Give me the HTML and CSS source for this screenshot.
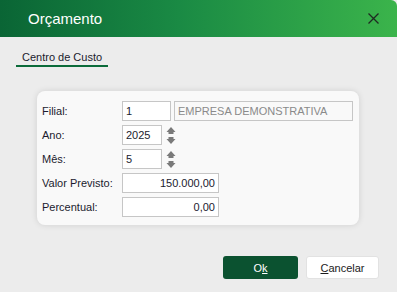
FILE: index.html
```html
<!DOCTYPE html>
<html lang="pt-BR">
<head>
  <meta charset="UTF-8">
  <meta name="viewport" content="width=device-width, initial-scale=1.0">
  <title>Orçamento</title>
  <link rel="stylesheet" href="styles.css">
</head>
<body>

  <div class="window">
    <div class="titlebar">
      <span class="title">Orçamento</span>
      <svg class="close" width="11" height="11" viewBox="0 0 11 11">
        <path d="M0.5 0.5 L10.5 10.5 M10.5 0.5 L0.5 10.5" stroke="#1f2a22" stroke-width="1.3" fill="none"/>
      </svg>
    </div>

    <div class="tabs">
      <div class="tab">Centro de Custo</div>
    </div>

    <div class="panel">
      <div class="row">
        <label>Filial:</label>
        <div class="field small">1</div>
        <div class="field readonly">EMPRESA DEMONSTRATIVA</div>
      </div>
      <div class="row">
        <label>Ano:</label>
        <div class="field year">2025</div>
        <div class="spin">
          <svg width="10" height="17" viewBox="0 0 10 17">
            <path d="M5 0 L9.5 5 L0.5 5 Z M2.5 5 H7.5 V7 H2.5 Z" fill="#7a7a7a"/>
            <path d="M2.5 10 H7.5 V12 H2.5 Z M0.5 12 L9.5 12 L5 17 Z" fill="#7a7a7a"/>
          </svg>
        </div>
      </div>
      <div class="row">
        <label>Mês:</label>
        <div class="field year">5</div>
        <div class="spin">
          <svg width="10" height="17" viewBox="0 0 10 17">
            <path d="M5 0 L9.5 5 L0.5 5 Z M2.5 5 H7.5 V7 H2.5 Z" fill="#7a7a7a"/>
            <path d="M2.5 10 H7.5 V12 H2.5 Z M0.5 12 L9.5 12 L5 17 Z" fill="#7a7a7a"/>
          </svg>
        </div>
      </div>
      <div class="row">
        <label>Valor Previsto:</label>
        <div class="field money">150.000,00</div>
      </div>
      <div class="row">
        <label>Percentual:</label>
        <div class="field money">0,00</div>
      </div>
    </div>

    <div class="footer">
      <button class="btn ok">O<u>k</u></button>
      <button class="btn cancel"><u>C</u>ancelar</button>
    </div>
  </div>

</body>
</html>
```

FILE: styles.css
```css
body {
  margin: 0;
  font-family: "Liberation Sans", Arial, sans-serif;
  background-color: #ececec;
  color: #1b1b2e;
}

.window {
  width: 397px;
  height: 292px;
  background-color: #ececec;
}

.titlebar {
  height: 37px;
  display: flex;
  align-items: center;
  padding-left: 28px;
  padding-right: 18px;
  background: linear-gradient(90deg, #0a6535 0%, #1a8a44 45%, #3bb44b 100%);
  border-top-right-radius: 6px;
}

.title {
  font-size: 15px;
  color: #fff;
  margin-top: -1px;
}

.close {
  margin-left: auto;
}

/* tabs */
.tabs {
  display: flex;
  padding-left: 16px;
  padding-top: 10px;
}

.tab {
  font-size: 11px;
  line-height: 14px;
  padding: 3px 6px 1px 6px;
  border-bottom: 2px solid #0b6b3a;
  white-space: nowrap;
}

/* panel */
.panel {
  margin: 24px 0 0 37px;
  width: 312px;
  height: 116px;
  padding: 10px 5px 8px 5px;
  background-color: #f9f9f9;
  border-radius: 8px;
  box-shadow: 0 0 6px rgba(0, 0, 0, 0.12);
  display: flex;
  flex-direction: column;
  gap: 4px;
}

.row {
  display: flex;
  align-items: center;
  height: 20px;
}

.row label {
  width: 80px;
  font-size: 11px;
}

.field {
  box-sizing: border-box;
  height: 20px;
  border: 1px solid #c6c6c6;
  background-color: #fff;
  font-size: 11px;
  line-height: 18px;
  padding: 0 3px;
}

.small {
  width: 49px;
}

.readonly {
  width: 179px;
  margin-left: 3px;
  background-color: #f9f9f9;
  color: #8a8a8a;
}

.year {
  width: 40px;
}

.money {
  width: 97px;
  text-align: right;
}

.spin {
  margin-left: 4px;
  display: flex;
  align-items: center;
  padding-top: 1px;
}

/* buttons */
.footer {
  display: flex;
  justify-content: flex-end;
  gap: 8px;
  padding-right: 18px;
  margin-top: 31px;
}

.btn {
  height: 23px;
  font-family: inherit;
  font-size: 11px;
  border-radius: 3px;
  cursor: pointer;
}

.ok {
  width: 75px;
  border: none;
  background-color: #0b5230;
  color: #fff;
}

.cancel {
  width: 73px;
  border: 1px solid #e2e2e2;
  background-color: #fff;
  color: #1b1b1b;
}
```
